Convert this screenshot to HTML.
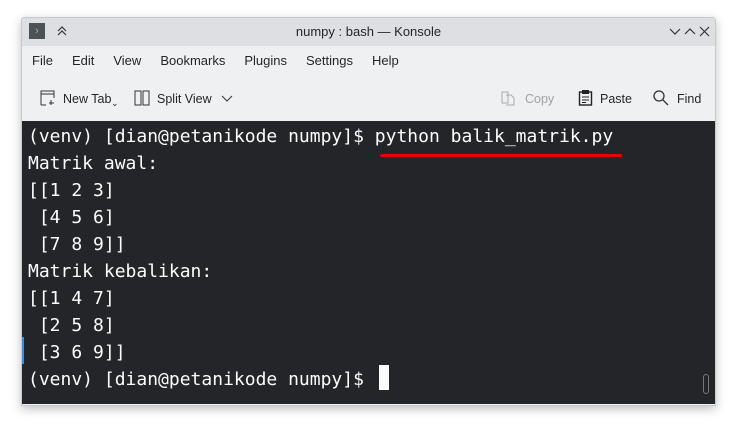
<!DOCTYPE html>
<html><head><style>
body{margin:0;width:737px;height:431px;background:#fff;position:relative;overflow:hidden;font-family:"Liberation Sans","DejaVu Sans",sans-serif}
.win{position:absolute;left:21px;top:17px;width:695px;height:389px;background:#eff0f1;box-shadow:0 3px 10px rgba(0,0,0,.25);border:1px solid #c8c9cc;box-sizing:border-box;border-radius:3px 3px 0 0;overflow:hidden}
.title{position:absolute;left:0;top:0;width:100%;height:28px;background:#dedfe2}
.ttxt{position:absolute;left:0;right:0;top:6px;text-align:center;font-size:13px;color:#232629}
.menu{position:absolute;top:35px;left:10px;font-size:13px;color:#232629}
.menu span{margin-right:19px}
.tb{position:absolute;top:74px;font-size:12.5px;color:#232629}
.term{position:absolute;left:0;top:103px;width:693px;height:283px;background:#232529;font-family:"DejaVu Sans Mono",monospace;font-size:18px;color:#fcfcfc}
.term div{position:absolute;left:6px;height:27px;line-height:27px;white-space:pre}
</style></head><body>
<div class="win">
<div class="title">
<div style="position:absolute;left:7px;top:5px;width:16px;height:16px;background:#4d5257;color:#aaa;font-size:11px;line-height:16px;text-align:center">›</div>
<svg style="position:absolute;left:34px;top:7px" width="12" height="12"><path d="M2 6 L6 2 L10 6 M2 10 L6 6 L10 10" stroke="#333" fill="none" stroke-width="1.2"/></svg>
<div class="ttxt">numpy : bash — Konsole</div>
<svg style="position:absolute;left:647px;top:8px" width="42" height="12"><path d="M1 3 L6 8 L11 3" stroke="#333" fill="none" stroke-width="1.2"/><path d="M16 8 L21 3 L26 8" stroke="#333" fill="none" stroke-width="1.2"/><path d="M31 1 L40 10 M40 1 L31 10" stroke="#333" fill="none" stroke-width="1.2"/></svg>
</div>
<div class="menu"><span>File</span><span>Edit</span><span>View</span><span>Bookmarks</span><span>Plugins</span><span>Settings</span><span>Help</span></div>
<svg style="position:absolute;left:18px;top:72px" width="16" height="16"><path d="M1 15 V1 H14 V8 M1 4 H14 M6 15 H1" stroke="#333" fill="none"/><path d="M11 10 V15 M9 13 H14" stroke="#333"/></svg>
<div class="tb" style="left:41px">New Tab</div>
<div class="tb" style="left:89px;top:80px;font-size:9px">⌄</div>
<svg style="position:absolute;left:112px;top:72px" width="16" height="16"><rect x="1" y="1" width="6" height="14" stroke="#333" fill="none"/><rect x="9" y="1" width="6" height="14" stroke="#333" fill="none"/></svg>
<div class="tb" style="left:135px">Split View</div>
<svg style="position:absolute;left:199px;top:77px" width="12" height="8"><path d="M1 1 L6 6 L11 1" stroke="#333" fill="none"/></svg>
<svg style="position:absolute;left:479px;top:72px" width="16" height="16"><path d="M1 2 H7 V13 H1 Z M5 5 H10 L13 8 V15 H5" stroke="#aaa" fill="none"/></svg>
<div class="tb" style="left:503px;color:#a0a2a4">Copy</div>
<svg style="position:absolute;left:556px;top:71px" width="16" height="18"><rect x="1.5" y="3" width="12" height="13" stroke="#222" fill="none" stroke-width="1.4"/><rect x="4" y="1" width="7" height="4" fill="#222"/><path d="M4 8 H11 M4 11 H11 M4 13.5 H8" stroke="#222"/></svg>
<div class="tb" style="left:578px">Paste</div>
<svg style="position:absolute;left:631px;top:72px" width="16" height="16"><circle cx="6" cy="6" r="5" stroke="#333" fill="none" stroke-width="1.3"/><path d="M10 10 L15 15" stroke="#333" stroke-width="1.3"/></svg>
<div class="tb" style="left:655px">Find</div>
<div class="term">
<div style="top:2px">(venv) [dian@petanikode numpy]$ python balik_matrik.py</div>
<div style="top:29px">Matrik awal:</div>
<div style="top:56px">[[1 2 3]</div>
<div style="top:83px"> [4 5 6]</div>
<div style="top:110px"> [7 8 9]]</div>
<div style="top:137px">Matrik kebalikan:</div>
<div style="top:164px">[[1 4 7]</div>
<div style="top:191px"> [2 5 8]</div>
<div style="top:218px"> [3 6 9]]</div>
<div style="top:245px">(venv) [dian@petanikode numpy]$ </div>
<span style="position:absolute;left:357px;top:244px;width:10px;height:25px;background:#fcfcfc"></span>
<span style="position:absolute;left:358px;top:33px;width:242px;height:3px;background:#e8000b;border-radius:2px"></span>
<span style="position:absolute;left:0;top:216px;width:2px;height:27px;background:#3d8ee0"></span>
<span style="position:absolute;left:681px;top:253px;width:6px;height:20px;border:1px solid #777;border-radius:4px;box-sizing:border-box"></span>
</div>
</div>
</body></html>
